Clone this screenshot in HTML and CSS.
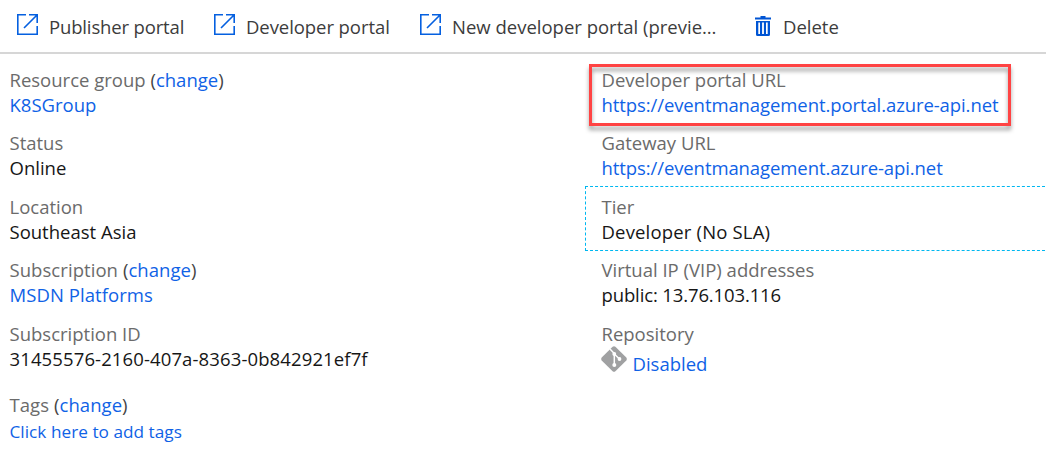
FILE: index.html
```html
<!DOCTYPE html>
<html lang="en">
<head>
<meta charset="utf-8">
<title>API Management service</title>
<link rel="stylesheet" href="styles.css">
</head>
<body>
<svg class="defs" width="0" height="0" aria-hidden="true">
  <symbol id="open" viewBox="0 0 21 21"><path d="M9 .8H.8v19.4h19.4V12M12 .8h8.2V9M20 1 7 14" fill="none" stroke="currentColor" stroke-width="1.6"/></symbol>
</svg>
<nav class="toolbar">
  <a class="command publisher"><svg class="open-icon"><use href="#open"/></svg><span>Publisher portal</span></a>
  <a class="command developer"><svg class="open-icon"><use href="#open"/></svg><span>Developer portal</span></a>
  <a class="command preview"><svg class="open-icon"><use href="#open"/></svg><span>New developer portal (previe…</span></a>
  <a class="command delete"><svg class="trash-icon" viewBox="0 0 16 20"><path d="M5.5 0h5v1.5H16V3.5H0V1.5h5.5zM1 5h14v13.5q0 1.5-1.5 1.5h-11Q1 20 1 18.5zM3.3 6.500v11.500h1.700V6.500zM7.100 6.500v11.500h1.800V6.500zM11 6.500v11.500h1.700V6.500z" fill="currentColor" fill-rule="evenodd"/></svg><span>Delete</span></a>
</nav>
<main class="essentials">
  <dl class="column">
    <div class="item"><dt>Resource group <span class="paren">(</span><a>change</a><span class="paren">)</span></dt><dd><a>K8SGroup</a></dd></div>
    <div class="item"><dt>Status</dt><dd>Online</dd></div>
    <div class="item"><dt>Location</dt><dd>Southeast Asia</dd></div>
    <div class="item subscription"><dt>Subscription <span class="paren">(</span><a>change</a><span class="paren">)</span></dt><dd><a>MSDN Platforms</a></dd></div>
    <div class="item"><dt>Subscription ID</dt><dd class="identifier">31455576-2160-407a-8363-0b842921ef7f</dd></div>
    <div class="item tags"><dt>Tags <span class="paren">(</span><a>change</a><span class="paren">)</span></dt><dd><a>Click here to add tags</a></dd></div>
  </dl>
  <dl class="column">
    <div class="item highlighted"><dt>Developer portal URL</dt><dd class="url"><a>https://eventmanagement.portal.azure-api.net</a></dd></div>
    <div class="item"><dt>Gateway URL</dt><dd class="url"><a>https://eventmanagement.azure-api.net</a></dd></div>
    <div class="item tier"><dt>Tier</dt><dd>Developer (No SLA)</dd></div>
    <div class="item"><dt>Virtual IP (VIP) addresses</dt><dd class="address">public: 13.76.103.116</dd></div>
    <div class="item repository"><dt>Repository</dt><dd><svg class="git-icon" viewBox="0 0 26 26"><path d="M11.6.7Q13-.3 14.4.7L25.3 11.6Q26.3 13 25.3 14.4L14.4 25.3Q13 26.3 11.6 25.3L.7 14.4Q-.3 13 .7 11.6z" fill="#a0a1a2"/><path d="M9 3l4.300 4.500V19M13.300 8l5.200 5" fill="none" stroke="#fff" stroke-width="1.5"/><g fill="#fff"><circle cx="13.3" cy="8" r="1.9"/><circle cx="13.3" cy="19" r="2"/><circle cx="18.5" cy="13" r="1.9"/></g></svg><a>Disabled</a></dd></div>
  </dl>
</main>
</body>
</html>
```

FILE: styles.css
```css
*, *::before, *::after { box-sizing: border-box; }
body {
  margin: 0;
  height: 451px;
  overflow: hidden;
  background: #fff;
  color: #161616;
  font: 18.5px/25px "Open Sans", "Noto Sans", sans-serif;
  white-space: nowrap;
}
.defs { display: block; }
a { color: #0f62e6; }
.toolbar {
  display: flex;
  height: 54px;
  padding: 14px 0 0 17px;
  border-bottom: 2px solid #d6d6d6;
}
.command { display: flex; align-items: flex-start; width: 197px; gap: 11px; color: #3c3c3c; }
.publisher { letter-spacing: -.15px; }
.developer { width: 206px; letter-spacing: -.07px; }
.preview { width: 335px; }
.open-icon { width: 21px; height: 21px; flex: none; color: #0560e0; }
.trash-icon { width: 16px; height: 20px; margin-top: 2px; flex: none; color: #0055d4; }
.delete { gap: 12px; }
.essentials { display: grid; grid-template-columns: 592px 1fr; padding: 12.5px 0 0 9.5px; }
.column { margin: 0; }
.item { position: relative; height: 63.5px; }
dt { color: #6b6b6b; }
dd { margin: 0; }
.paren { color: #444; }
.subscription { letter-spacing: .06px; }
.identifier { letter-spacing: .12px; }
.tags { margin-top: 7.5px; }
.tags dt { letter-spacing: .06px; }
.tags dd { font-size: 17.2px; padding-top: 2px; letter-spacing: .03px; }
.url { letter-spacing: -.09px; }
.address { letter-spacing: -.13px; }
.highlighted::after {
  content: "";
  position: absolute;
  left: -12.5px;
  top: -2.5px;
  width: 422px;
  height: 62px;
  border: 3px solid #ff4343;
  filter: drop-shadow(0 4px 2px rgba(0, 0, 0, .38));
}
.tier::before {
  content: "";
  position: absolute;
  left: -16.5px;
  right: 1px;
  top: -7.5px;
  height: 65px;
  border: 1px dashed #00b7f0;
  border-right: 0;
}
.tier dd { letter-spacing: .17px; }
.repository dd { display: flex; gap: 6px; }
.repository dd a { padding-top: 5px; }
.git-icon { width: 26px; height: 26px; margin-left: -1px; flex: none; }
```
